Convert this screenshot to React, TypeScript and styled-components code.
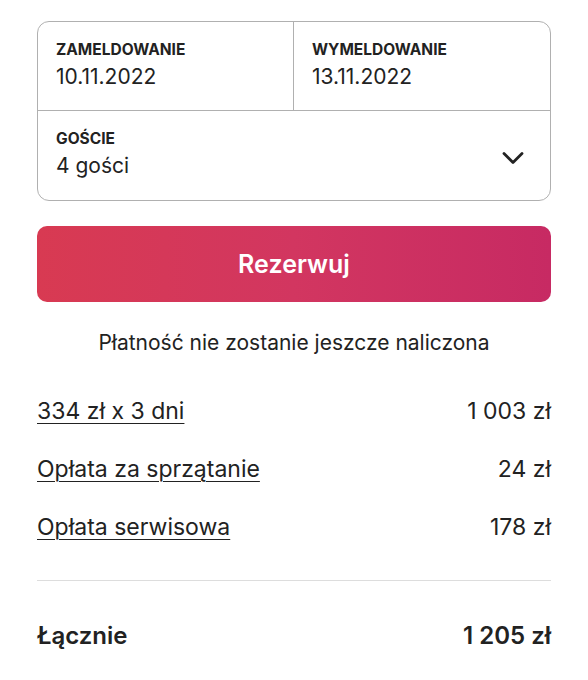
import React from 'react';
import styled, { createGlobalStyle } from 'styled-components';

const GlobalStyle = createGlobalStyle`
  body {
    margin: 0;
    background: #fff;
    font-family: Inter, "Noto Sans", sans-serif;
    color: #222;
  }
`;

const Page = styled.div`
  width: 514px;
  padding: 21px 37px 0;
`;

const Card = styled.div`
  border: 1px solid #b0b0b0;
  border-radius: 12px;
  overflow: hidden;
`;

const DatesRow = styled.div`
  display: grid;
  grid-template-columns: 1fr 1fr;
  border-bottom: 1px solid #b0b0b0;
`;

const Field = styled.div<{ divider?: boolean }>`
  height: 88px;
  box-sizing: border-box;
  padding: 19px 18px 0;
  border-right: ${({ divider }) => (divider ? '1px solid #b0b0b0' : 'none')};
`;

const GuestsField = styled.div`
  height: 89px;
  box-sizing: border-box;
  padding: 19px 26px 0 18px;
  display: flex;
  align-items: flex-start;
  justify-content: space-between;
`;

const Label = styled.div`
  font-size: 15.5px;
  font-weight: 700;
  text-transform: uppercase;
  line-height: 18px;
`;

const Value = styled.div`
  font-size: 21px;
  line-height: 28px;
  margin-top: 4px;
`;

const ChevronWrap = styled.div`
  margin-top: 21px;
  display: flex;
`;

const Button = styled.button`
  display: block;
  width: 100%;
  height: 76px;
  margin-top: 25px;
  border: none;
  border-radius: 10px;
  background: linear-gradient(90deg, #d83a52 0%, #d23660 50%, #c72a63 100%);
  color: #fff;
  font-family: inherit;
  font-size: 25px;
  font-weight: 600;
`;

const Note = styled.p`
  margin: 27px 0 0;
  text-align: center;
  font-size: 21px;
  line-height: 28px;
`;

const Lines = styled.div`
  margin-top: 40px;
  display: flex;
  flex-direction: column;
  gap: 30px;
`;

const Line = styled.div`
  display: flex;
  justify-content: space-between;
  font-size: 23px;
  line-height: 28px;
`;

const LineLabel = styled.span`
  text-decoration: underline;
  text-underline-offset: 4px;
  text-decoration-thickness: 1px;
`;

const Divider = styled.hr`
  margin: 39px 0 0;
  border: none;
  border-top: 1px solid #ddd;
`;

const Total = styled(Line)`
  margin-top: 41px;
  font-size: 24px;
  font-weight: 600;
`;

const Chevron = () => (
  <svg width="22" height="14" viewBox="0 0 22 14" fill="none">
    <path d="M2 2.5 L11 11.5 L20 2.5" stroke="#222" strokeWidth="2.8" strokeLinecap="round" strokeLinejoin="round" />
  </svg>
);

const items = [
  { label: '334 zł x 3 dni', amount: '1 003 zł' },
  { label: 'Opłata za sprzątanie', amount: '24 zł' },
  { label: 'Opłata serwisowa', amount: '178 zł' },
];

export default function App() {
  return (
    <Page>
      <GlobalStyle />
      <Card>
        <DatesRow>
          <Field divider>
            <Label>Zameldowanie</Label>
            <Value>10.11.2022</Value>
          </Field>
          <Field>
            <Label>Wymeldowanie</Label>
            <Value>13.11.2022</Value>
          </Field>
        </DatesRow>
        <GuestsField>
          <div>
            <Label>Goście</Label>
            <Value>4 gości</Value>
          </div>
          <ChevronWrap>
            <Chevron />
          </ChevronWrap>
        </GuestsField>
      </Card>
      <Button>Rezerwuj</Button>
      <Note>Płatność nie zostanie jeszcze naliczona</Note>
      <Lines>
        {items.map((item) => (
          <Line key={item.label}>
            <LineLabel>{item.label}</LineLabel>
            <span>{item.amount}</span>
          </Line>
        ))}
      </Lines>
      <Divider />
      <Total>
        <span>Łącznie</span>
        <span>1 205 zł</span>
      </Total>
    </Page>
  );
}
